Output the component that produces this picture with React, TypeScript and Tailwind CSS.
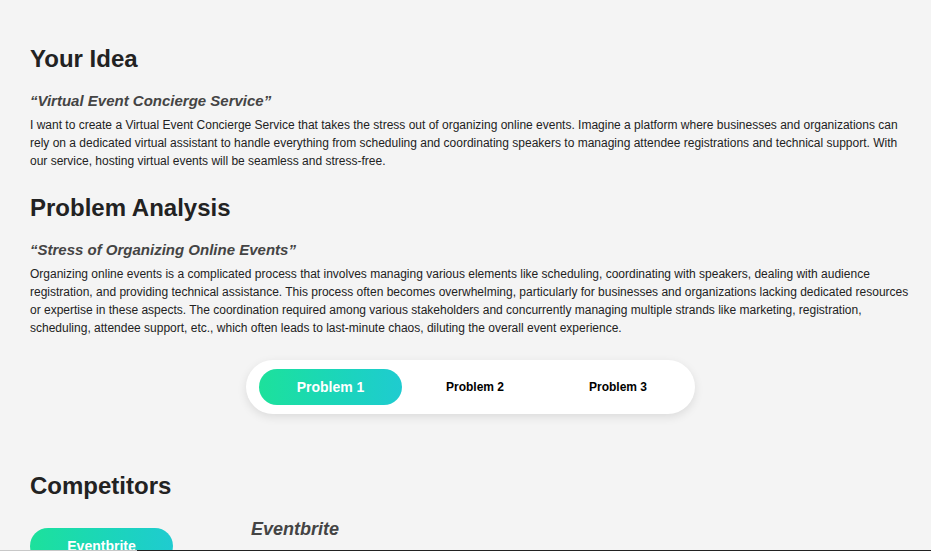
import { useState } from "react";

const gradient = "bg-gradient-to-r from-[#1de19b] to-[#1fcbd0]";

function Section({
  title,
  quote,
  text,
  className,
}: {
  title: string;
  quote: string;
  text: string;
  className?: string;
}) {
  return (
    <div className={className}>
      <h2 className="text-[24px] leading-[29px] font-bold text-[#222]">{title}</h2>
      <h3 className="mt-[19px] text-[15px] leading-[18px] font-bold italic text-[#444]">
        “{quote}”
      </h3>
      <p className="mt-[6px] text-[12px] leading-[18px] text-[#222]">{text}</p>
    </div>
  );
}

function App() {
  const [active, setActive] = useState(0);
  const tabs = ["Problem 1", "Problem 2", "Problem 3"];

  return (
    <div
      className="min-h-[551px] bg-[#f4f4f4] pl-[30px] pr-[20px] pt-[44px] pb-10"
      style={{ fontFamily: '"Liberation Sans", Arial, sans-serif' }}
    >
      <Section
        title="Your Idea"
        quote="Virtual Event Concierge Service"
        text="I want to create a Virtual Event Concierge Service that takes the stress out of organizing online events. Imagine a platform where businesses and organizations can rely on a dedicated virtual assistant to handle everything from scheduling and coordinating speakers to managing attendee registrations and technical support. With our service, hosting virtual events will be seamless and stress-free."
      />
      <Section
        className="mt-[23px]"
        title="Problem Analysis"
        quote="Stress of Organizing Online Events"
        text="Organizing online events is a complicated process that involves managing various elements like scheduling, coordinating with speakers, dealing with audience registration, and providing technical assistance. This process often becomes overwhelming, particularly for businesses and organizations lacking dedicated resources or expertise in these aspects. The coordination required among various stakeholders and concurrently managing multiple strands like marketing, registration, scheduling, attendee support, etc., which often leads to last-minute chaos, diluting the overall event experience."
      />

      <div className="mt-[23px] ml-[216px] flex h-[54px] w-[449px] items-center gap-[3px] rounded-full bg-white pl-[13px] pr-[4px] shadow-[0_3px_10px_rgba(0,0,0,0.1)]">
        {tabs.map((t, i) => (
          <button
            key={t}
            onClick={() => setActive(i)}
            className={
              i === active
                ? `flex h-[36px] w-[143px] shrink-0 items-center justify-center rounded-full ${gradient} text-[14px] font-bold text-white`
                : "flex h-[36px] w-[140px] shrink-0 items-center justify-center rounded-full text-[12px] font-bold text-black"
            }
          >
            {t}
          </button>
        ))}
      </div>

      <h2 className="mt-[57px] text-[24px] leading-[29px] font-bold text-[#222]">Competitors</h2>
      <div className="mt-[19px] flex gap-[78px]">
        <button
          className={`flex h-[36px] w-[143px] shrink-0 items-center justify-center rounded-full ${gradient} mt-[9px] text-[14px] font-bold text-white`}
        >
          Eventbrite
        </button>
        <div>
          <h3 className="text-[18px] leading-[21px] font-bold italic text-[#444]">Eventbrite</h3>
        </div>
      </div>

      <div className="fixed bottom-0 left-0 flex h-px w-full">
        <div className="w-[137px] bg-[#c8c8c8]" />
        <div className="flex-1 bg-[#222]" />
      </div>
    </div>
  );
}

export default App;
